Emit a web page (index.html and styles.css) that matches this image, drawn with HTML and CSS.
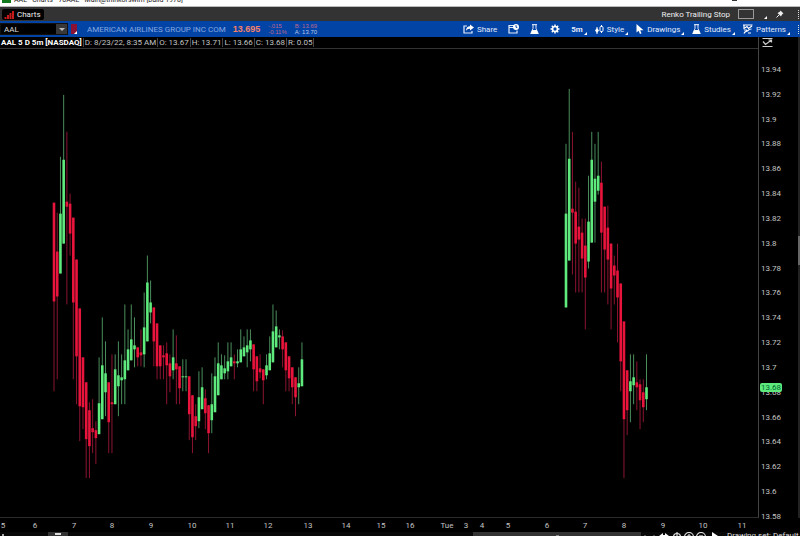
FILE: index.html
```html
<!DOCTYPE html>
<html lang="en">
<head>
    <meta charset="UTF-8">
    <meta name="viewport" content="width=device-width, initial-scale=1.0">
    <title>AAL - Charts</title>
    <link rel="stylesheet" href="styles.css">
</head>
<body>
    <header class="titlebar">
        <span class="app-icon"></span>
        <span class="title">AAL - Charts - 70AAL - Main@thinkorswim [build 1978]</span>
        <span class="minimize"></span>
    </header>

    <nav class="tabs">
        <button class="tab">
            <svg width="11" height="9" viewBox="0 0 11 9"><path d="M1.5 9V7M4 9V5M6.500 9V3M9 9V1" stroke="#c41a1a" stroke-width="2"/></svg>
            Charts
        </button>
        <div class="workspace">
            <span class="workspace-name">Renko Trailing Stop</span>
            <button class="swatch" aria-label="Layout"></button>
            <i class="corner"></i>
            <button class="icon-btn" aria-label="Pin">
                <svg width="8" height="8" viewBox="0 0 8 8"><path d="M4.500 0.500L7.500 3.500L6.500 4L5.500 5.500L5 6.500L1.500 3L2.500 2.500L4 1.500Z" fill="#eee"/><path d="M3.200 4.800L0.500 7.500" stroke="#eee"/></svg>
            </button>
            <i class="dots"></i>
        </div>
    </nav>

    <div class="toolbar">
        <div class="symbol">
            <input type="text" value="AAL" aria-label="Symbol">
            <button class="arrow" aria-label="Symbol list"></button>
        </div>
        <button class="link-btn" aria-label="Link colour"><i></i></button>
        <span class="company">AMERICAN AIRLINES GROUP INC COM</span>
        <span class="last">13.695</span>
        <span class="pair change"><span>-.015</span><span>-0.11%</span></span>
        <span class="pair quote"><span class="bid">B: 13.69</span><span>A: 13.70</span></span>

        <div class="actions">
            <button class="share">
                <svg width="11" height="10" viewBox="0 0 11 10"><path d="M4 2H1V9H9V7" fill="none" stroke="#e6edfa" stroke-width="1.200"/><path d="M7 0.500L11 3.500L7 6.500V4.700C5 4.600 4 5.200 3 7C3 4 4.500 2.400 7 2.300Z" fill="#fff"/></svg>
                Share
            </button>
            <button class="icon-only" aria-label="Notes">
                <svg width="11" height="10" viewBox="0 0 11 10"><path d="M6 1.500H1V9H9V6.500M1 3.500H5" fill="none" stroke="#e6edfa" stroke-width="1.200"/><circle cx="8" cy="3" r="3" fill="#fff"/><path d="M8 1.200V3.300H9.300" fill="none" stroke="#0243a6"/></svg>
            </button>
            <button class="icon-only" aria-label="Edit studies">
                <svg width="9" height="11" viewBox="0 0 9 11"><path d="M3 1V4.500L0.800 9.500H8.200L6 4.500V1" fill="none" stroke="#dce6f8"/><path d="M2 0.700H7" stroke="#fff"/><path d="M2.300 6H6.700L8.500 10H0.500Z" fill="#fff"/></svg>
            </button>
            <button class="icon-only" aria-label="Settings">
                <svg width="10" height="10" viewBox="0 0 10 10"><circle cx="5" cy="5" r="2.500" fill="none" stroke="#fff" stroke-width="1.700"/><path d="M5 0.500V2M5 8V9.500M0.500 5H2M8 5H9.500M1.800 1.800L3 3M7 7L8.200 8.200M8.200 1.800L7 3M3 7L1.800 8.200" stroke="#fff" stroke-width="1.500"/></svg>
            </button>
            <button class="menu"><b>5m</b><i class="corner"></i></button>
            <button class="menu">
                <svg width="9" height="9" viewBox="0 0 9 9"><path d="M2 2V9M6.500 0V8" stroke="#fff"/><path d="M2 3L4 5.500L2 8L0 5.500Z" fill="#fff"/><rect x="5" y="1.500" width="3" height="5" rx="1" fill="#0243a6" stroke="#fff"/></svg>
                Style<i class="corner"></i>
            </button>
            <button class="menu">
                <svg width="8" height="10" viewBox="0 0 8 10"><path d="M0.500 0V8.500L2.600 6.700L4 10L5.500 9.300L4.200 6.200H7.500Z" fill="#fff"/></svg>
                Drawings<i class="corner"></i>
            </button>
            <button class="menu">
                <svg width="9" height="11" viewBox="0 0 9 11"><path d="M3 1V4.500L0.800 9.500H8.200L6 4.500V1" fill="none" stroke="#dce6f8"/><path d="M2 0.700H7" stroke="#fff"/><path d="M2.300 6H6.700L8.500 10H0.500Z" fill="#fff"/></svg>
                Studies<i class="corner"></i>
            </button>
            <button class="menu">
                <svg width="10" height="10" viewBox="0 0 10 10"><path d="M0 1H9.500M1 1V4.500L4 2.500L5.500 4.500L9 2M1 9.500C2 6.500 4 7.500 5 6.500S7 5 8.500 5M1 6H4M5 9H8" fill="none" stroke="#fff" stroke-width="1.200"/></svg>
                Patterns<i class="corner"></i>
            </button>
            <i class="dots"></i>
        </div>
    </div>

    <main class="chart">
        <div class="left">
            <div class="info">
                <b>AAL 5 D 5m [NASDAQ]</b>
                <span>D: 8/23/22, 8:35 AM</span>
                <span>O: 13.67</span>
                <span>H: 13.71</span>
                <span>L: 13.66</span>
                <span>C: 13.68</span>
                <span>R: 0.05</span>
            </div>
            <svg class="plot" id="plot" viewBox="0 49 758 469" preserveAspectRatio="none"></svg>
        </div>
        <aside class="prices">
            <svg class="scale-icon" width="12" height="11" viewBox="0 0 12 11"><path d="M0.500 1.500H10.500M0.500 9.500H10.500M1 4.500L3.500 7.500L9.500 3M6.500 3H9.500V5.500" fill="none" stroke="#ccc" stroke-width="1.200"/></svg>
            <div class="price-labels" id="prices"></div>
            <span class="marker">13.68</span>
        </aside>
        <div class="scroll"><i></i></div>
    </main>

    <svg class="times" id="times"></svg>

    <footer class="bottom">
        <i class="tick"></i>
        <button class="handle" aria-label="Scroll left"><i></i></button>
        <div class="range"><i></i></div>
        <div class="tools">
            <svg width="78" height="10" viewBox="0 0 78 10"><g fill="none" stroke="#ddd" stroke-width="1.200"><path d="M4 3V5M13 3V5" stroke="#777"/><circle cx="36" cy="5" r="3.500"/><path d="M36 0V9"/><circle cx="48" cy="5" r="4.500"/><path d="M46 4H50M48 2V6"/><circle cx="60" cy="5" r="4.500"/><path d="M58 4H62"/></g><path d="M18 4L22 1V3H24V1L28 4L24 7V5H22V7ZM71 0L77 4L71 8Z" fill="#fff"/></svg>
            <a href="#">Drawing set: Default</a>
        </div>
    </footer>

    <script src="script.js"></script>
</body>
</html>
```
FILE: styles.css
```css
* {
    box-sizing: border-box;
}
body {
    margin: 0;
    height: 100vh;
    display: flex;
    flex-direction: column;
    overflow: hidden;
    background-color: #000;
    color: #c4c4c4;
    font-family: Roboto, "Liberation Sans", Arial, sans-serif;
    font-size: 8px;
}
button {
    padding: 0;
    border: none;
    background: none;
    color: inherit;
    font: inherit;
    display: flex;
    align-items: center;
    cursor: pointer;
}
svg {
    flex-shrink: 0;
}
.titlebar {
    height: 7px;
    flex-shrink: 0;
    display: flex;
    align-items: flex-start;
    gap: 3px;
    padding-left: 2px;
    background-color: #fff;
    border-bottom: 1px solid #bbb;
    color: #222;
    overflow: hidden;
}
.app-icon {
    width: 9px;
    height: 3px;
    background-color: #127a1c;
}
.title {
    line-height: 8px;
    margin-top: -4px;
    font-size: 7px;
    white-space: nowrap;
}
.minimize {
    width: 5px;
    height: 1px;
    margin-left: auto;
    margin-right: 63px;
    background-color: #333;
}
.tabs {
    height: 14px;
    flex-shrink: 0;
    display: flex;
    align-items: center;
    justify-content: space-between;
    background-color: #333;
}
.tab {
    height: 11px;
    margin-left: 2px;
    padding: 0 3px 0 2px;
    gap: 2px;
    border-radius: 2px;
    background-color: #000;
    color: #eee;
}
.workspace {
    height: 12px;
    display: flex;
    align-items: center;
    color: #eee;
}
.swatch {
    width: 16px;
    height: 10px;
    margin: 0 10px 0 8px;
    border: 1px solid #999;
}
.icon-btn {
    margin: 0 14px 0 9px;
}
.dots {
    width: 1px;
    height: 9px;
    margin-right: 1px;
    border-right: 1px dotted #ddd;
}
.corner {
    margin-bottom: 1px;
    border-left: 3px solid transparent;
    border-bottom: 3px solid #fff;
    align-self: flex-end;
}
.toolbar {
    height: 16px;
    flex-shrink: 0;
    display: flex;
    align-items: center;
    background-color: #0243a6;
    white-space: nowrap;
}
.symbol {
    display: flex;
    width: 68px;
    height: 12px;
    border: 1px solid #111;
    background-color: #000;
}
.symbol input {
    width: 55px;
    padding: 0 3px;
    border: none;
    background-color: #000;
    color: #ddd;
    font: inherit;
}
.arrow {
    width: 11px;
    justify-content: center;
    background-color: #383838;
}
.arrow::before {
    content: "";
    border: 3px solid transparent;
    border-top-color: #bbb;
    border-bottom: none;
}
.link-btn {
    width: 6px;
    height: 10px;
    margin-left: 3px;
    align-items: flex-end;
    justify-content: flex-end;
    background-color: #8c1235;
}
.link-btn i {
    border-left: 3px solid transparent;
    border-bottom: 3px solid #fff;
}
.company {
    margin-left: 10px;
    color: #85a8e0;
}
.last {
    margin-left: 7px;
    font-family: "Liberation Sans", Arial, sans-serif;
    font-size: 9px;
    font-weight: bold;
    color: #f4806a;
}
.pair {
    display: flex;
    flex-direction: column;
    font-family: "Liberation Sans", Arial, sans-serif;
    font-size: 6px;
    line-height: 6px;
    color: #b8c8ea;
}
.change {
    margin-left: 8px;
    color: #bd6a8c;
}
.quote {
    margin-left: 8px;
}
.bid {
    color: #bd6a8c;
}
.actions {
    height: 16px;
    margin-left: auto;
    display: flex;
    align-items: center;
    color: #e0e9fa;
    gap: 8px;
}
.actions button {
    gap: 3px;
    height: 14px;
}
.share,
.actions .icon-only {
    margin-right: 3px;
}
.actions .corner {
    margin-left: -2px;
}
.chart {
    flex: 1;
    min-height: 0;
    display: flex;
}
.left {
    flex: 1;
    display: flex;
    flex-direction: column;
    min-width: 0;
    border-right: 1px solid #444;
    border-bottom: 1px solid #2c2c2c;
}
.info {
    height: 12px;
    flex-shrink: 0;
    display: flex;
    align-items: center;
    border-bottom: 1px solid #333;
    white-space: nowrap;
}
.info b {
    color: #fff;
    padding: 0 1px;
}
.info span {
    padding: 0 1px;
    border-left: 1px solid #444;
}
.info span:last-child {
    border-right: 1px solid #444;
}
.plot {
    width: 100%;
    flex: 1;
    min-height: 0;
}
.wick {
    stroke-width: 1;
}
.wick.up {
    stroke: #4a8f5c;
}
.wick.down {
    stroke: #8c1430;
}
.body.up {
    fill: #5eea7c;
}
.body.down {
    fill: #e8143c;
}
.prices {
    position: relative;
    width: 39px;
    padding-left: 2px;
    display: flex;
    flex-direction: column;
}
.scale-icon {
    margin-left: 1px;
}
.price-labels {
    flex: 1;
    min-height: 0;
    margin-top: 17px;
    margin-bottom: -4px;
    display: flex;
    flex-direction: column;
    justify-content: space-between;
    line-height: 10px;
}
.marker {
    position: absolute;
    left: 1px;
    top: 72%;
    padding: 0 1px;
    border-radius: 2px;
    background-color: #5eea7c;
    color: #063;
    line-height: 9px;
}
.scroll {
    width: 2px;
    padding-top: 199px;
    background-color: #222;
}
.scroll i {
    display: block;
    height: 29px;
    background-color: #666;
}
.times {
    width: 100%;
    height: 14px;
    fill: #c4c4c4;
}
.bottom {
    height: 4px;
    flex-shrink: 0;
    display: flex;
    align-items: flex-start;
    background-color: #080808;
    overflow: hidden;
}
.tick {
    width: 2px;
    height: 2px;
    margin: 2px 0 0 2px;
    background-color: #aaa;
}
.handle {
    width: 20px;
    height: 4px;
    margin-left: 44px;
    justify-content: center;
    background-color: #333;
}
.handle i {
    width: 6px;
    height: 2px;
    background-color: #ddd;
}
.range {
    flex: 1;
    height: 4px;
    margin-left: 405px;
    display: flex;
    justify-content: center;
    align-items: flex-end;
    background-color: #333;
}
.range i {
    width: 3px;
    height: 1px;
    background-color: #888;
}
.tools {
    width: 159px;
    display: flex;
    gap: 8px;
    white-space: nowrap;
}
.tools a {
    color: #ddd;
    line-height: 8px;
    text-decoration: none;
}
```
FILE: script.js
```js
// each candle: direction, high, body top, body bottom, low
const sessions = [
    { start: 54, candles: [
        ['d',203,203,302,392], ['d',213,252,297,380], ['u',157,214,274,274], ['u',95,160,244,244],
        ['d',132,202,207,305], ['d',194,204,234,256], ['d',218,218,303,380], ['d',260,260,357,405],
        ['d',309,309,407,442], ['d',358,358,408,430], ['d',383,383,440,479], ['d',403,411,447,479],
        ['d',400,429,433,454], ['d',422,431,439,465], ['u',358,404,435,435], ['u',318,366,420,420],
        ['u',342,374,393,417], ['d',383,383,423,454], ['d',355,403,405,454], ['u',355,370,405,405],
        ['u',342,376,387,417], ['u',355,378,381,405], ['u',305,361,380,405], ['u',330,350,371,371],
        ['u',305,340,361,361], ['u',318,346,350,368], ['d',348,348,358,367], ['d',330,353,356,367],
        ['u',293,328,355,368], ['u',256,283,342,342], ['u',281,303,313,324], ['d',308,308,342,367],
        ['d',324,324,367,380], ['d',346,346,367,380], ['d',346,356,358,380], ['d',343,354,366,405],
        ['d',355,364,377,393], ['u',330,358,371,380], ['d',336,364,370,405], ['d',367,367,389,405],
        ['u',360,377,378,392], ['u',360,377,378,392], ['d',377,377,415,441], ['d',396,396,438,454],
        ['d',405,417,427,441], ['u',372,398,422,429], ['u',368,388,410,410], ['d',390,399,414,430],
        ['d',406,406,434,454], ['u',374,405,421,434], ['u',358,377,413,413], ['u',343,364,396,396],
        ['u',355,366,380,380], ['u',356,369,374,380], ['u',343,362,372,380], ['u',343,358,367,367],
        ['d',355,362,364,380], ['u',350,362,364,368], ['u',330,350,363,363], ['u',337,348,357,357],
        ['u',330,346,353,368], ['u',330,341,350,362], ['d',345,345,370,392], ['d',357,357,382,392],
        ['d',355,369,373,379], ['d',370,370,381,405], ['u',355,366,376,380], ['u',337,354,371,371],
        ['u',305,332,363,363], ['u',311,327,348,348], ['u',330,336,338,350], ['d',331,337,350,368],
        ['d',343,343,371,392], ['d',357,357,379,392], ['d',368,368,388,405], ['d',378,378,398,417],
        ['u',368,384,388,405], ['u',343,360,387,387]
    ] },
    { start: 566, candles: [
        ['u',144,214,308,308], ['u',89,159,261,261], ['d',132,209,213,275], ['d',182,212,244,293],
        ['d',188,227,240,293], ['d',219,233,259,293], ['d',219,246,278,330], ['u',176,222,262,269],
        ['u',132,160,243,243], ['u',144,179,202,243], ['u',132,176,191,195], ['d',162,183,233,293],
        ['d',207,207,250,293], ['d',206,228,260,305], ['d',244,244,289,330], ['d',256,266,276,305],
        ['d',244,271,298,343], ['d',284,284,362,392], ['d',322,322,420,479], ['d',371,371,411,436],
        ['u',355,382,392,423], ['u',355,378,386,405], ['d',362,383,388,411], ['d',380,385,401,430],
        ['d',380,393,408,423], ['u',355,388,400,411]
    ] }
];

const times = [
    ['5', 3], ['6', 35], ['7', 74], ['8', 112], ['9', 151], ['10', 192], ['11', 230], ['12', 268],
    ['13', 308], ['14', 346], ['15', 381], ['16', 410], ['Tue', 447], ['3', 466], ['4', 482], ['5', 508],
    ['6', 547], ['7', 585], ['8', 624], ['9', 663], ['10', 703], ['11', 742]
];

const STEP = 3.22;
const BODY = 2.6;

let shapes = '';
sessions.forEach(session => {
    session.candles.forEach(([dir, high, top, bottom, low], i) => {
        const x = session.start + i * STEP;
        const cls = dir === 'u' ? 'up' : 'down';
        shapes += `<line class="wick ${cls}" x1="${x}" x2="${x}" y1="${high}" y2="${low}"/>`;
        shapes += `<rect class="body ${cls}" x="${x - BODY / 2}" y="${top}" width="${BODY}" height="${bottom - top}"/>`;
    });
});
document.getElementById('plot').innerHTML = shapes;

let labels = '';
for (let cents = 1394; cents >= 1358; cents -= 2) {
    labels += `<span>${cents / 100}</span>`;
}
document.getElementById('prices').innerHTML = labels;

document.getElementById('times').innerHTML = times
    .map(([label, x]) => `<text x="${x / 8}%" y="10" text-anchor="middle">${label}</text>`)
    .join('');
```
